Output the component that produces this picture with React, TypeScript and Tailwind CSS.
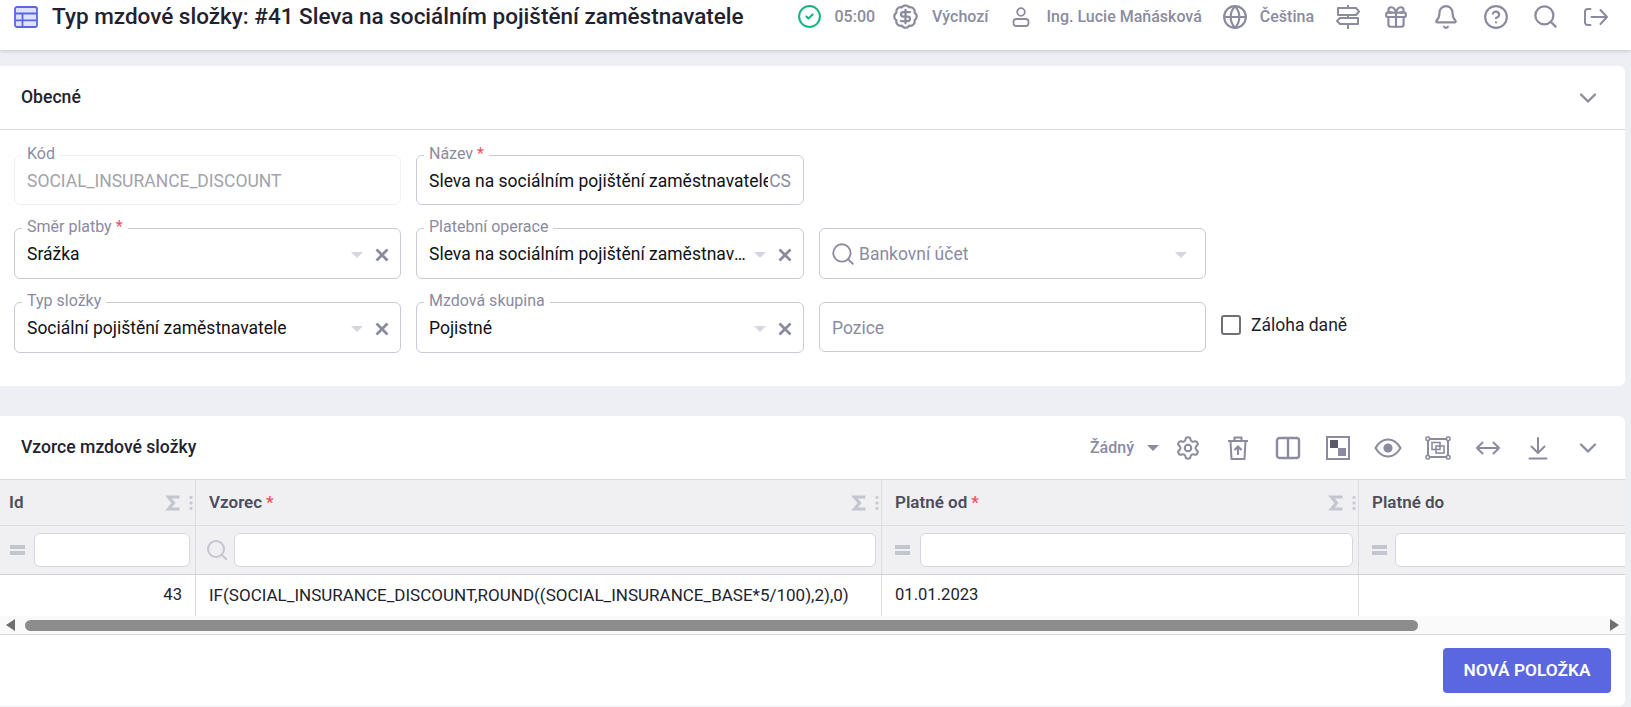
import { ReactNode } from "react";
import { BadgeDollarSign, Bell, ChevronDown, CircleCheck, Gift, Globe, Search, Settings, CircleHelp } from "lucide-react";

const GRAY = "text-[#8b8b9f]";

// Malé ikony, které v balíčcích nejsou
const Signpost = () => (
  <svg width="26" height="26" viewBox="0 0 26 26" fill="none" stroke="currentColor" strokeWidth="2" strokeLinejoin="round">
    <path d="M13 1v3M13 11v3M13 20v5" />
    <path d="M3 4h18l3 3.5-3 3.5H3z" />
    <path d="M23 14H5l-3 3 3 3h18z" />
  </svg>
);

const UserIcon = () => (
  <svg width="22" height="22" viewBox="0 0 22 22" fill="none" stroke="currentColor" strokeWidth="1.8">
    <circle cx="11" cy="6" r="3.8" />
    <rect x="3.5" y="13" width="15" height="7" rx="2.8" />
  </svg>
);

const ExitIcon = () => (
  <svg width="26" height="26" viewBox="0 0 26 26" fill="none" stroke="currentColor" strokeWidth="2" strokeLinecap="round" strokeLinejoin="round">
    <path d="M8.5 5H5.5A2.5 2.5 0 0 0 3 7.5v11A2.5 2.5 0 0 0 5.5 21h3" />
    <path d="M9.5 13H25M18.5 6l6.5 7-6.5 7" />
  </svg>
);

const TableIcon = () => (
  <svg width="24" height="22" viewBox="0 0 24 22" fill="#dfe2fb" stroke="#5b67e0" strokeWidth="1.8">
    <rect x="1" y="1" width="22" height="20" rx="2" />
    <path d="M1 7.5h22M1 14.3h22M8.5 7.5V21" />
  </svg>
);

const TrashUp = () => (
  <svg width="24" height="26" viewBox="0 0 24 26" fill="none" stroke="currentColor" strokeWidth="2" strokeLinejoin="round">
    <path d="M2 6h20M8.5 6V2.5h7V6M4.5 6l1 18h13l1-18" />
    <path d="M12 20v-8M8.5 15l3.5-3.5 3.5 3.5" strokeWidth="2.2" />
  </svg>
);

const ColumnsIcon = () => (
  <svg width="26" height="24" viewBox="0 0 26 24" fill="none" stroke="currentColor" strokeWidth="2.4">
    <rect x="2" y="2" width="22" height="20" rx="2.5" />
    <path d="M13 2v20" />
  </svg>
);

const Checker = () => (
  <svg width="24" height="24" viewBox="0 0 24 24">
    <rect x="1" y="1" width="22" height="22" fill="none" stroke="currentColor" strokeWidth="2" />
    <rect x="4" y="4" width="8" height="8" fill="#5a5a68" />
    <rect x="12" y="12" width="8" height="8" fill="currentColor" />
  </svg>
);

const EyeIcon = () => (
  <svg width="28" height="20" viewBox="0 0 28 20" fill="none" stroke="currentColor" strokeWidth="2">
    <path d="M1.5 10C5 4 9 1.5 14 1.5S23 4 26.5 10C23 16 19 18.5 14 18.5S5 16 1.5 10z" />
    <circle cx="14" cy="10" r="4.6" fill="currentColor" stroke="none" />
  </svg>
);

const FrameIcon = () => (
  <svg width="26" height="24" viewBox="0 0 26 24" fill="none" stroke="currentColor" strokeWidth="1.6">
    <rect x="3" y="3" width="20" height="18" strokeWidth="2" />
    <rect x="7" y="6.5" width="8" height="7" />
    <rect x="11" y="10" width="8" height="7" />
    <rect x="1" y="1" width="3.5" height="3.5" rx="1.2" fill="#fff" />
    <rect x="21.5" y="1" width="3.5" height="3.5" rx="1.2" fill="#fff" />
    <rect x="1" y="19.5" width="3.5" height="3.5" rx="1.2" fill="#fff" />
    <rect x="21.5" y="19.5" width="3.5" height="3.5" rx="1.2" fill="#fff" />
  </svg>
);

const ArrowsIcon = () => (
  <svg width="26" height="16" viewBox="0 0 26 16" fill="none" stroke="currentColor" strokeWidth="2" strokeLinecap="round" strokeLinejoin="round">
    <path d="M2 8h22M7.5 2.5 2 8l5.5 5.5M18.5 2.5 24 8l-5.5 5.5" />
  </svg>
);

const DownloadIcon = () => (
  <svg width="20" height="24" viewBox="0 0 20 24" fill="none" stroke="currentColor" strokeWidth="2" strokeLinecap="round" strokeLinejoin="round">
    <path d="M10 2v15M3.5 10.5 10 17l6.5-6.5M1.5 22.5h17" />
  </svg>
);

const Sigma = () => (
  <svg width="15" height="16" viewBox="0 0 15 16" fill="none" stroke="#c3c5cf" strokeWidth="3.2">
    <path d="M14.5 2H3.5l5 6-5 6h11" />
  </svg>
);

const Dots = () => (
  <svg width="4" height="16" viewBox="0 0 4 16" fill="#c8cad3">
    <rect x="0.5" y="1" width="3" height="3" rx="1" />
    <rect x="0.5" y="6.5" width="3" height="3" rx="1" />
    <rect x="0.5" y="12" width="3" height="3" rx="1" />
  </svg>
);

const EqualsIcon = () => (
  <div className="flex flex-col gap-[2px]">
    <div className="h-[4px] w-[15px] bg-[#c3c5cf]" />
    <div className="h-[4px] w-[15px] bg-[#c3c5cf]" />
  </div>
);

const Caret = () => <div className="h-0 w-0 border-x-[6px] border-t-[6px] border-x-transparent border-t-[#d5d6de]" />;

const Clear = () => (
  <svg width="14" height="14" viewBox="0 0 14 14" fill="none" stroke="#8b8b9f" strokeWidth="2.8">
    <path d="M1.5 1.5l11 11M12.5 1.5l-11 11" />
  </svg>
);

const Required = () => <span className="ml-1 text-[#f0505f]">*</span>;

// Pole s plovoucím popiskem
const Field = ({ label, required, disabled, children, h = "h-[50px]" }: { label?: string; required?: boolean; disabled?: boolean; children: ReactNode; h?: string }) => (
  <div className={`relative flex ${h} items-center rounded-md border pl-[12px] pr-[12px] pt-[2px] text-[17.5px] ${disabled ? "border-[#f0f0f3] text-[#a3a3ab]" : "border-[#c9cad4] text-[#111118]"}`}>
    {label && (
      <span className="absolute left-[7px] top-[-12px] bg-white px-[5px] text-[16px] leading-[20px] text-[#8b8b9f]">
        {label}
        {required && <Required />}
      </span>
    )}
    {children}
  </div>
);

const SelectField = ({ label, required, value }: { label: string; required?: boolean; value: string }) => (
  <Field label={label} required={required} h="h-[51px]">
    <span className="min-w-0 flex-1 truncate">{value}</span>
    <div className="ml-[3px]"><Caret /></div>
    <div className="ml-[12px] mr-[-1px]"><Clear /></div>
  </Field>
);

const HeaderCell = ({ width, label, required, last, pad = "pl-[13px]" }: { width: string; label: string; required?: boolean; last?: boolean; pad?: string }) => (
  <div className={`flex ${width} shrink-0 items-center border-[#dcdde2] ${pad} pr-[2px] ${last ? "" : "border-r"}`}>
    <span className="flex-1 text-[17px] font-semibold text-[#4d4d5c]">
      {label}
      {required && <Required />}
    </span>
    {!last && (
      <div className="flex items-center gap-[9px]">
        <Sigma />
        <Dots />
      </div>
    )}
  </div>
);

const FilterCell = ({ width, icon, inputWidth, last, pad = "pl-[13px]" }: { width: string; icon: ReactNode; inputWidth: string; last?: boolean; pad?: string }) => (
  <div className={`flex ${width} shrink-0 items-center border-[#dcdde2] ${pad} ${last ? "gap-[8px] overflow-hidden" : "justify-between border-r pr-[5px]"}`}>
    {icon}
    <div className={`h-[34px] ${inputWidth} shrink-0 rounded-md border border-[#d6d7de] bg-white`} />
  </div>
);

const TopItem = ({ icon, text }: { icon: ReactNode; text: string }) => (
  <div className="flex items-center">
    {icon}
    <span className="text-[16px] font-medium text-[#8b8b9f]">{text}</span>
  </div>
);

export default function App() {
  return (
    <div className="h-[707px] w-[1631px] overflow-hidden bg-[#eeeff4] font-['Roboto',sans-serif]">
      {/* Horní lišta */}
      <header className="flex h-[50px] items-start justify-between bg-white pl-[14px] pr-[23px] pt-[3px] shadow-[0_1px_4px_rgba(0,0,0,0.18)]">
        <div className="flex h-[27px] items-center">
          <TableIcon />
          <h1 className="ml-[14px] text-[22.5px] font-medium leading-[27px] text-[#22222e]">
            Typ mzdové složky: #41 Sleva na sociálním pojištění zaměstnavatele
          </h1>
        </div>
        <div className={`flex items-center ${GRAY}`}>
          <TopItem icon={<CircleCheck size={25} strokeWidth={2} className="mr-[12px] text-[#14b87f]" />} text="05:00" />
          <TopItem icon={<BadgeDollarSign size={27} strokeWidth={2} className="ml-[17px] mr-[13px]" />} text="Výchozí" />
          <TopItem icon={<div className="ml-[22px] mr-[14px]"><UserIcon /></div>} text="Ing. Lucie Maňásková" />
          <TopItem icon={<Globe size={26} strokeWidth={2} className="ml-[20px] mr-[12px]" />} text="Čeština" />
          <div className="ml-[21px]"><Signpost /></div>
          <Gift size={26} strokeWidth={2} className="ml-[22px]" />
          <Bell size={26} strokeWidth={2} className="ml-[24px]" />
          <CircleHelp size={26} strokeWidth={2} className="ml-[24px]" />
          <Search size={27} strokeWidth={2} className="ml-[23px]" />
          <div className="ml-[23px]"><ExitIcon /></div>
        </div>
      </header>

      {/* Obecné */}
      <section className="mr-[6px] mt-[16px] h-[320px] rounded-r-md bg-white">
        <div className="flex h-[64px] items-center justify-between border-b border-[#d8d9de] pl-[21px] pr-[23px]">
          <h2 className="text-[17.6px] font-medium text-[#22222e]">Obecné</h2>
          <ChevronDown size={28} strokeWidth={2} className={GRAY} />
        </div>
        <div className="grid grid-cols-[387px_388px_387px_auto] items-start gap-x-[15px] gap-y-[23px] pl-[14px] pt-[25px]">
          <Field label="Kód" disabled>SOCIAL_INSURANCE_DISCOUNT</Field>
          <Field label="Název" required>
            <span className="min-w-0 flex-1 overflow-hidden whitespace-nowrap">Sleva na sociálním pojištění zaměstnavatele</span>
            <span className="ml-[1px] text-[#8b8b9f]">CS</span>
          </Field>
          <div className="col-span-2" />
          <SelectField label="Směr platby" required value="Srážka" />
          <SelectField label="Platební operace" value="Sleva na sociálním pojištění zaměstnavatele" />
          <Field h="h-[51px]">
            <Search size={26} strokeWidth={1.7} className="ml-[-2px] mr-[3px] mt-[-2px] text-[#8b8b9f]" />
            <span className="flex-1 text-[#8b8b9f]">Bankovní účet</span>
            <div className="mr-[6px]"><Caret /></div>
          </Field>
          <div />
          <SelectField label="Typ složky" value="Sociální pojištění zaměstnavatele" />
          <SelectField label="Mzdová skupina" value="Pojistné" />
          <Field><span className="text-[#8b8b9f]">Pozice</span></Field>
          <label className="mt-[10px] flex items-center gap-[10px] text-[17.5px] text-[#22222e]">
            <span className="h-[20px] w-[20px] rounded-[3px] border-2 border-[#6f6f76]" />
            Záloha daně
          </label>
        </div>
      </section>

      {/* Vzorce mzdové složky */}
      <section className="mr-[6px] mt-[30px] h-[290px] rounded-r-md bg-white">
        <div className="flex h-[63px] items-center pl-[21px]">
          <h2 className="flex-1 text-[17.6px] font-medium text-[#22222e]">Vzorce mzdové složky</h2>
          <div className={`flex items-center ${GRAY}`}>
            <span className="text-[16px] font-medium">Žádný</span>
            <div className="ml-[13px] mr-[4px] h-0 w-0 border-x-[6px] border-t-[6px] border-x-transparent border-t-[#8b8b9f]" />
            {[
              <Settings size={26} strokeWidth={1.9} />,
              <TrashUp />,
              <ColumnsIcon />,
              <Checker />,
              <EyeIcon />,
              <FrameIcon />,
              <ArrowsIcon />,
              <DownloadIcon />,
              <ChevronDown size={28} strokeWidth={2} />,
            ].map((icon, i) => (
              <div key={i} className="flex h-[30px] w-[50px] items-center justify-center">{icon}</div>
            ))}
            <div className="w-[12px]" />
          </div>
        </div>

        <div className="flex h-[46px] border-t border-[#d8d9de] bg-[#f0f0f3]">
          <HeaderCell width="w-[196px]" label="Id" pad="pl-[9px]" />
          <HeaderCell width="w-[686px]" label="Vzorec" required />
          <HeaderCell width="w-[477px]" label="Platné od" required />
          <HeaderCell width="flex-1" label="Platné do" last />
        </div>
        <div className="flex h-[50px] border-y border-[#dcdde2] border-b-[#cfd0d6] bg-[#f0f0f3]">
          <FilterCell width="w-[196px]" icon={<EqualsIcon />} inputWidth="w-[156px]" pad="pl-[10px]" />
          <FilterCell width="w-[686px]" icon={<Search size={24} strokeWidth={2} className="text-[#c3c5cf]" />} inputWidth="w-[642px]" pad="pl-[9px]" />
          <FilterCell width="w-[477px]" icon={<EqualsIcon />} inputWidth="w-[433px]" />
          <FilterCell width="flex-1" icon={<EqualsIcon />} inputWidth="w-[240px]" last />
        </div>
        <div className="flex h-[41px] text-[16.6px] text-[#22222e]">
          <div className="flex w-[196px] items-center justify-end border-r border-[#dcdde2] pr-[13px]">43</div>
          <div className="flex w-[686px] items-center border-r border-[#dcdde2] pl-[13px] text-[17px]">IF(SOCIAL_INSURANCE_DISCOUNT,ROUND((SOCIAL_INSURANCE_BASE*5/100),2),0)</div>
          <div className="flex w-[477px] items-center border-r border-[#dcdde2] pl-[13px]">01.01.2023</div>
        </div>

        {/* Posuvník */}
        <div className="flex h-[19px] items-center border-b border-[#d8d9de] bg-[#fafafa] pl-[6px] pr-[6px]">
          <div className="h-0 w-0 border-y-[6px] border-r-[9px] border-y-transparent border-r-[#6f6f6f]" />
          <div className="ml-[10px] h-[11px] w-[1393px] rounded-full bg-[#8c8c8c]" />
          <div className="flex-1" />
          <div className="h-0 w-0 border-y-[6px] border-l-[9px] border-y-transparent border-l-[#6f6f6f]" />
        </div>

        <div className="flex justify-end pr-[14px] pt-[13px]">
          <button className="h-[45px] w-[168px] rounded-[4px] bg-[#5b67e0] text-[17.3px] font-semibold text-white">NOVÁ POLOŽKA</button>
        </div>
      </section>
    </div>
  );
}
